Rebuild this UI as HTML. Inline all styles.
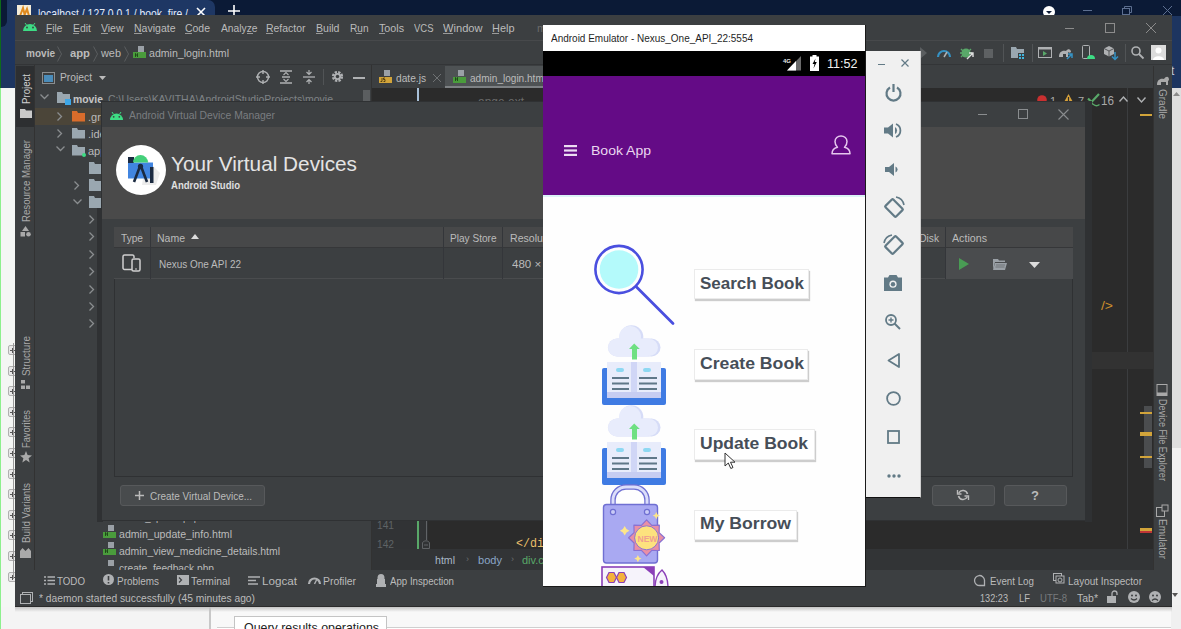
<!DOCTYPE html>
<html><head><meta charset="utf-8">
<style>
*{margin:0;padding:0;box-sizing:border-box}
html,body{width:1181px;height:629px;overflow:hidden;background:#f0f0f0;font-family:"Liberation Sans",sans-serif;position:relative}
.a{position:absolute}
.t{position:absolute;white-space:pre;line-height:1}
svg{overflow:visible}
</style></head><body>
<div class="a" style="left:0px;top:0px;width:1181px;height:629px;background:#f1f1f1;"></div>
<div class="a" style="left:0px;top:0px;width:1181px;height:16px;background:#0b1a36;"></div>
<div class="a" style="left:0px;top:0px;width:16px;height:88px;background:#1d3560;"></div>
<div class="a" style="left:1px;top:0px;width:6px;height:27px;background:#0b1a36;border-radius:0 0 6px 0"></div>
<div class="a" style="left:0px;top:0px;width:1px;height:88px;background:#0d6a1a;"></div>
<div class="a" style="left:0px;top:88px;width:1px;height:541px;background:#8df08d;"></div>
<div class="a" style="left:1px;top:88px;width:14px;height:541px;background:#f4f6f4;"></div>
<div class="a" style="left:1171px;top:16px;width:10px;height:72px;background:#1d3560;"></div>
<div class="a" style="left:1171px;top:88px;width:10px;height:360px;background:#e4e4e4;"></div>
<div class="a" style="left:1172px;top:88px;width:9px;height:360px;background:#dedede;"></div>
<svg class="a" style="left:1173px;top:92px;" width="7" height="4" viewBox="0 0 7 4"><path d="M0 4L3.5 0L7 4Z" fill="#8a8a8a"/></svg>
<div class="t" style="left:1171px;top:64.84px;font-size:12px;font-family:'Liberation Sans';font-weight:normal;color:#c0c8d8;">t</div>
<div class="a" style="left:7px;top:0px;width:208px;height:20px;background:#1e3764;border-radius:7px 7px 0 0"></div>
<svg class="a" style="left:17px;top:5px;" width="14" height="12" viewBox="0 0 14 12"><rect x="0" y="0" width="14" height="12" fill="#f4ecd8"/><path d="M3 11 L6 3 L8 11 M7 11 L10 4 L12 11" stroke="#e08a1e" stroke-width="2" fill="none"/></svg>
<div class="t" style="left:38px;top:7.00px;font-size:13px;font-family:'Liberation Sans';font-weight:normal;color:#e6ecf6;transform:scaleX(0.7983);transform-origin:0 0;">localhost / 127.0.0.1 / book_fire /</div>
<svg class="a" style="left:196px;top:7px;" width="10" height="10" viewBox="0 0 10 10"><path d="M1 1L9 9M9 1L1 9" stroke="#fff" stroke-width="1.6"/></svg>
<svg class="a" style="left:228px;top:5px;" width="12" height="12" viewBox="0 0 12 12"><path d="M6 0V12M0 6H12" stroke="#fff" stroke-width="1.6"/></svg>
<svg class="a" style="left:1043px;top:6px;" width="12" height="12" viewBox="0 0 12 12"><circle cx="6" cy="6" r="6" fill="#fff"/><path d="M3 5h6l-3 3z" fill="#0b1a36"/></svg>
<div class="a" style="left:1083px;top:10px;width:9px;height:1px;background:#5d6f90;"></div>
<svg class="a" style="left:1122px;top:6px;" width="10" height="9" viewBox="0 0 10 9"><rect x="0.5" y="2.5" width="7" height="6" fill="none" stroke="#5d6f90"/><path d="M2.5 2.5V0.5H9.5V6.5H7.5" fill="none" stroke="#5d6f90"/></svg>
<svg class="a" style="left:1163px;top:6px;" width="9" height="9" viewBox="0 0 9 9"><path d="M0 0L9 9M9 0L0 9" stroke="#5d6f90" stroke-width="1"/></svg>
<div class="a" style="left:0px;top:607px;width:1181px;height:22px;background:#f4f4f4;"></div>
<div class="a" style="left:209px;top:607px;width:2px;height:22px;background:#c8c8c8;"></div>
<div class="a" style="left:211px;top:607px;width:960px;height:22px;background:#f8f8f8;"></div>
<div class="a" style="left:217px;top:627px;width:960px;height:2px;background:#ffffff;border-top:1px solid #cfcfcf"></div>
<div class="a" style="left:234px;top:616px;width:153px;height:13px;background:#ffffff;border:1px solid #c4c4c4;border-bottom:none"></div>
<div class="t" style="left:244px;top:621.00px;font-size:13px;font-family:'Liberation Sans';font-weight:normal;color:#222222;transform:scaleX(0.9532);transform-origin:0 0;">Query results operations</div>
<div class="a" style="left:1171px;top:605px;width:10px;height:24px;background:#f0f0f0;"></div>
<div class="a" style="left:0px;top:600px;width:1px;height:29px;background:#8df08d;"></div>
<svg class="a" style="left:1171px;top:592px;" width="8" height="6" viewBox="0 0 8 6"><path d="M1 1h6l-3 4z" fill="#555"/></svg>
<div class="a" style="left:8px;top:345px;width:9px;height:10px;background:#e8e8e8;border:1px solid #b0b0b0;border-radius:2px"></div>
<div class="a" style="left:10px;top:350px;width:6px;height:1px;background:#555;"></div>
<div class="a" style="left:12px;top:348px;width:1px;height:5px;background:#555;"></div>
<div class="a" style="left:8px;top:366px;width:9px;height:10px;background:#e8e8e8;border:1px solid #b0b0b0;border-radius:2px"></div>
<div class="a" style="left:10px;top:371px;width:6px;height:1px;background:#555;"></div>
<div class="a" style="left:12px;top:369px;width:1px;height:5px;background:#555;"></div>
<div class="a" style="left:8px;top:386px;width:9px;height:10px;background:#e8e8e8;border:1px solid #b0b0b0;border-radius:2px"></div>
<div class="a" style="left:10px;top:391px;width:6px;height:1px;background:#555;"></div>
<div class="a" style="left:12px;top:389px;width:1px;height:5px;background:#555;"></div>
<div class="a" style="left:8px;top:407px;width:9px;height:10px;background:#e8e8e8;border:1px solid #b0b0b0;border-radius:2px"></div>
<div class="a" style="left:10px;top:412px;width:6px;height:1px;background:#555;"></div>
<div class="a" style="left:12px;top:410px;width:1px;height:5px;background:#555;"></div>
<div class="a" style="left:8px;top:427px;width:9px;height:10px;background:#e8e8e8;border:1px solid #b0b0b0;border-radius:2px"></div>
<div class="a" style="left:10px;top:432px;width:6px;height:1px;background:#555;"></div>
<div class="a" style="left:12px;top:430px;width:1px;height:5px;background:#555;"></div>
<div class="a" style="left:8px;top:448px;width:9px;height:10px;background:#e8e8e8;border:1px solid #b0b0b0;border-radius:2px"></div>
<div class="a" style="left:10px;top:453px;width:6px;height:1px;background:#555;"></div>
<div class="a" style="left:12px;top:451px;width:1px;height:5px;background:#555;"></div>
<div class="a" style="left:8px;top:469px;width:9px;height:10px;background:#e8e8e8;border:1px solid #b0b0b0;border-radius:2px"></div>
<div class="a" style="left:10px;top:474px;width:6px;height:1px;background:#555;"></div>
<div class="a" style="left:12px;top:472px;width:1px;height:5px;background:#555;"></div>
<div class="a" style="left:8px;top:489px;width:9px;height:10px;background:#e8e8e8;border:1px solid #b0b0b0;border-radius:2px"></div>
<div class="a" style="left:10px;top:494px;width:6px;height:1px;background:#555;"></div>
<div class="a" style="left:12px;top:492px;width:1px;height:5px;background:#555;"></div>
<div class="a" style="left:8px;top:510px;width:9px;height:10px;background:#e8e8e8;border:1px solid #b0b0b0;border-radius:2px"></div>
<div class="a" style="left:10px;top:515px;width:6px;height:1px;background:#555;"></div>
<div class="a" style="left:12px;top:513px;width:1px;height:5px;background:#555;"></div>
<div class="a" style="left:8px;top:530px;width:9px;height:10px;background:#e8e8e8;border:1px solid #b0b0b0;border-radius:2px"></div>
<div class="a" style="left:10px;top:535px;width:6px;height:1px;background:#555;"></div>
<div class="a" style="left:12px;top:533px;width:1px;height:5px;background:#555;"></div>
<div class="a" style="left:8px;top:551px;width:9px;height:10px;background:#e8e8e8;border:1px solid #b0b0b0;border-radius:2px"></div>
<div class="a" style="left:10px;top:556px;width:6px;height:1px;background:#555;"></div>
<div class="a" style="left:12px;top:554px;width:1px;height:5px;background:#555;"></div>
<div class="a" style="left:8px;top:572px;width:9px;height:10px;background:#e8e8e8;border:1px solid #b0b0b0;border-radius:2px"></div>
<div class="a" style="left:10px;top:577px;width:6px;height:1px;background:#555;"></div>
<div class="a" style="left:12px;top:575px;width:1px;height:5px;background:#555;"></div>
<div class="a" style="left:13px;top:343px;width:1px;height:236px;background:#9a9a9a;"></div>
<div class="a" style="left:15px;top:15px;width:1157px;height:592px;background:#3c3f41;"></div>
<div class="a" style="left:15px;top:40px;width:1157px;height:1px;background:#47494b;"></div>
<svg class="a" style="left:22px;top:21px;" width="16" height="10" viewBox="0 0 16 10"><path d="M1 10 A7 7 0 0 1 15 10Z" fill="#3ddc84"/><circle cx="5" cy="6.5" r="0.9" fill="#3c3f41"/><circle cx="11" cy="6.5" r="0.9" fill="#3c3f41"/><path d="M3 2L4.5 4M13 2L11.5 4" stroke="#3ddc84" stroke-width="1"/></svg>
<div class="t" style="left:46px;top:22.69px;font-size:11px;font-family:'Liberation Sans';font-weight:normal;color:#bbbbbb;transform:scaleX(0.9304);transform-origin:0 0;">File</div>
<div class="t" style="left:73px;top:22.69px;font-size:11px;font-family:'Liberation Sans';font-weight:normal;color:#bbbbbb;transform:scaleX(0.9489);transform-origin:0 0;">Edit</div>
<div class="t" style="left:101px;top:22.69px;font-size:11px;font-family:'Liberation Sans';font-weight:normal;color:#bbbbbb;transform:scaleX(0.9511);transform-origin:0 0;">View</div>
<div class="t" style="left:134px;top:22.69px;font-size:11px;font-family:'Liberation Sans';font-weight:normal;color:#bbbbbb;transform:scaleX(0.9557);transform-origin:0 0;">Navigate</div>
<div class="t" style="left:185px;top:22.69px;font-size:11px;font-family:'Liberation Sans';font-weight:normal;color:#bbbbbb;transform:scaleX(0.9507);transform-origin:0 0;">Code</div>
<div class="t" style="left:221px;top:22.69px;font-size:11px;font-family:'Liberation Sans';font-weight:normal;color:#bbbbbb;transform:scaleX(0.9325);transform-origin:0 0;">Analyze</div>
<div class="t" style="left:266px;top:22.69px;font-size:11px;font-family:'Liberation Sans';font-weight:normal;color:#bbbbbb;transform:scaleX(0.9500);transform-origin:0 0;">Refactor</div>
<div class="t" style="left:316px;top:22.69px;font-size:11px;font-family:'Liberation Sans';font-weight:normal;color:#bbbbbb;transform:scaleX(0.9604);transform-origin:0 0;">Build</div>
<div class="t" style="left:350px;top:22.69px;font-size:11px;font-family:'Liberation Sans';font-weight:normal;color:#bbbbbb;transform:scaleX(0.9164);transform-origin:0 0;">Run</div>
<div class="t" style="left:379px;top:22.69px;font-size:11px;font-family:'Liberation Sans';font-weight:normal;color:#bbbbbb;transform:scaleX(0.9732);transform-origin:0 0;">Tools</div>
<div class="t" style="left:414px;top:22.69px;font-size:11px;font-family:'Liberation Sans';font-weight:normal;color:#bbbbbb;transform:scaleX(0.8619);transform-origin:0 0;">VCS</div>
<div class="t" style="left:443px;top:22.69px;font-size:11px;font-family:'Liberation Sans';font-weight:normal;color:#bbbbbb;transform:scaleX(1.0096);transform-origin:0 0;">Window</div>
<div class="t" style="left:492px;top:22.69px;font-size:11px;font-family:'Liberation Sans';font-weight:normal;color:#bbbbbb;transform:scaleX(0.9945);transform-origin:0 0;">Help</div>
<div class="t" style="left:537px;top:22.69px;font-size:11px;font-family:'Liberation Sans';font-weight:normal;color:#6b6b6b;">m</div>
<div class="a" style="left:46px;top:33px;width:6px;height:1px;background:#9a9a9a;"></div>
<div class="a" style="left:73px;top:33px;width:6px;height:1px;background:#9a9a9a;"></div>
<div class="a" style="left:101px;top:33px;width:7px;height:1px;background:#9a9a9a;"></div>
<div class="a" style="left:134px;top:33px;width:8px;height:1px;background:#9a9a9a;"></div>
<div class="a" style="left:185px;top:33px;width:7px;height:1px;background:#9a9a9a;"></div>
<div class="a" style="left:247px;top:33px;width:6px;height:1px;background:#9a9a9a;"></div>
<div class="a" style="left:266px;top:33px;width:7px;height:1px;background:#9a9a9a;"></div>
<div class="a" style="left:316px;top:33px;width:7px;height:1px;background:#9a9a9a;"></div>
<div class="a" style="left:356px;top:33px;width:6px;height:1px;background:#9a9a9a;"></div>
<div class="a" style="left:379px;top:33px;width:6px;height:1px;background:#9a9a9a;"></div>
<div class="a" style="left:443px;top:33px;width:10px;height:1px;background:#9a9a9a;"></div>
<div class="a" style="left:492px;top:33px;width:7px;height:1px;background:#9a9a9a;"></div>
<div class="a" style="left:1065px;top:28px;width:9px;height:1px;background:#8c8c8c;"></div>
<div class="a" style="left:1105px;top:23px;width:10px;height:10px;border:1px solid #8c8c8c"></div>
<svg class="a" style="left:1146px;top:23px;" width="10" height="10" viewBox="0 0 10 10"><path d="M0 0L10 10M10 0L0 10" stroke="#8c8c8c" stroke-width="1"/></svg>
<div class="a" style="left:15px;top:64px;width:1157px;height:1px;background:#333537;"></div>
<div class="t" style="left:26px;top:47.69px;font-size:11px;font-family:'Liberation Sans';font-weight:bold;color:#bbbbbb;transform:scaleX(0.9120);transform-origin:0 0;">movie</div>
<svg class="a" style="left:57px;top:46px;" width="5" height="16" viewBox="0 0 5 16"><path d="M0.5 0.5L4.5 8L0.5 15.5" stroke="#5a5d5f" fill="none"/></svg>
<div class="t" style="left:70px;top:47.69px;font-size:11px;font-family:'Liberation Sans';font-weight:bold;color:#bbbbbb;transform:scaleX(1.0224);transform-origin:0 0;">app</div>
<svg class="a" style="left:93px;top:46px;" width="5" height="16" viewBox="0 0 5 16"><path d="M0.5 0.5L4.5 8L0.5 15.5" stroke="#5a5d5f" fill="none"/></svg>
<div class="t" style="left:101px;top:47.69px;font-size:11px;font-family:'Liberation Sans';font-weight:normal;color:#bbbbbb;transform:scaleX(0.9907);transform-origin:0 0;">web</div>
<svg class="a" style="left:124px;top:46px;" width="5" height="16" viewBox="0 0 5 16"><path d="M0.5 0.5L4.5 8L0.5 15.5" stroke="#5a5d5f" fill="none"/></svg>
<svg class="a" style="left:133px;top:46px;" width="13" height="12" viewBox="0 0 13 12"><path d="M5 0H11V6H5Z" fill="#9aa0a6"/><rect x="0" y="6" width="13" height="6" fill="#4a9c3c"/><path d="M2.5 7.2V11M2.5 9H4.5M4.5 7.2V11" stroke="#173b12" stroke-width="0.8"/></svg>
<div class="t" style="left:149px;top:47.69px;font-size:11px;font-family:'Liberation Sans';font-weight:normal;color:#bbbbbb;transform:scaleX(0.9620);transform-origin:0 0;">admin_login.html</div>
<svg class="a" style="left:920px;top:47px;" width="8" height="12" viewBox="0 0 8 12"><path d="M0 0L7 6L0 12Z" fill="#5b5e60"/></svg>
<svg class="a" style="left:937px;top:47px;" width="14" height="11" viewBox="0 0 14 11"><path d="M1 10A6 6 0 0 1 13 10" stroke="#3592c4" stroke-width="2.2" fill="none"/><path d="M7 10L10 5" stroke="#afb1b3" stroke-width="1.5"/></svg>
<svg class="a" style="left:960px;top:46px;" width="14" height="14" viewBox="0 0 14 14"><circle cx="6" cy="7" r="4.5" fill="#59a869"/><path d="M1 3L3 5M11 3L9 5M0 7H2M10 7H12M1 11L3 9" stroke="#59a869" stroke-width="1.3"/><path d="M7 13L13 7M9 7H13V11" stroke="#e0e0e0" stroke-width="1.4" fill="none"/></svg>
<div class="a" style="left:984px;top:49px;width:9px;height:9px;background:#5e6163;"></div>
<div class="a" style="left:1003px;top:44px;width:1px;height:18px;background:#515456;"></div>
<svg class="a" style="left:1011px;top:46px;" width="14" height="13" viewBox="0 0 14 13"><path d="M0 1H5L6 3H13V12H0Z" fill="#9aa7b0"/><rect x="7" y="7" width="6" height="6" fill="#3c3f41"/><rect x="8" y="8" width="2" height="2" fill="#40b6e0"/><rect x="11" y="8" width="2" height="2" fill="#40b6e0"/><rect x="8" y="11" width="2" height="2" fill="#40b6e0"/><rect x="11" y="11" width="2" height="2" fill="#40b6e0"/></svg>
<div class="a" style="left:1032px;top:44px;width:1px;height:18px;background:#515456;"></div>
<svg class="a" style="left:1038px;top:47px;" width="14" height="11" viewBox="0 0 14 11"><rect x="0.5" y="0.5" width="13" height="10" fill="none" stroke="#afb1b3"/><rect x="0.5" y="0.5" width="13" height="2" fill="#afb1b3"/><path d="M5 4L9 6.5L5 9Z" fill="#59a869"/></svg>
<svg class="a" style="left:1058px;top:46px;" width="15" height="14" viewBox="0 0 15 14"><path d="M1 11C1 6 4 4 8 5C10 2 13 3 13 6C12 7 11 7 10 6V11H8V8H5V11H3Z" fill="#afb1b3"/><path d="M9 13L14 8M10 8H14V12" stroke="#3592c4" stroke-width="1.5" fill="none"/></svg>
<svg class="a" style="left:1082px;top:45px;" width="13" height="15" viewBox="0 0 13 15"><rect x="0.5" y="0.5" width="7" height="13" rx="1" fill="none" stroke="#afb1b3"/><path d="M5 14A4 4 0 0 1 13 14Z" fill="#3ddc84"/></svg>
<svg class="a" style="left:1104px;top:46px;" width="14" height="14" viewBox="0 0 14 14"><path d="M5 0L10 2.5V8L5 10.5L0 8V2.5Z" fill="#afb1b3"/><path d="M0 2.5L5 5L10 2.5M5 5V10.5" stroke="#3c3f41" stroke-width="0.8" fill="none"/><path d="M11 6V13M8 10.5L11 13.5L14 10.5" stroke="#3592c4" stroke-width="1.5" fill="none"/></svg>
<div class="a" style="left:1125px;top:44px;width:1px;height:18px;background:#515456;"></div>
<svg class="a" style="left:1131px;top:46px;" width="13" height="13" viewBox="0 0 13 13"><circle cx="5" cy="5" r="4" fill="none" stroke="#afb1b3" stroke-width="1.6"/><path d="M8 8L12.5 12.5" stroke="#afb1b3" stroke-width="1.8"/></svg>
<svg class="a" style="left:1151px;top:45px;" width="15" height="15" viewBox="0 0 15 15"><rect x="0" y="0" width="15" height="15" fill="#dcdcdc"/><circle cx="7.5" cy="5.5" r="3" fill="#fff"/><path d="M2 15C2 10 13 10 13 15Z" fill="#fff"/></svg>
<div class="a" style="left:15px;top:65px;width:20px;height:542px;background:#3c3f41;"></div>
<div class="a" style="left:34px;top:65px;width:1px;height:505px;background:#323232;"></div>
<div class="a" style="left:16px;top:66px;width:18px;height:61px;background:#2d2f31;"></div>
<div class="t" style="left:20.5px;top:104.0px;font-size:11px;font-weight:normal;color:#d0d0d0;transform:rotate(-90deg) scaleX(0.8759);transform-origin:0 0;">Project</div>
<svg class="a" style="left:20px;top:109px;" width="12" height="9" viewBox="0 0 12 9"><path d="M0 0H5L6 1.5H12V9H0Z" fill="#c9c9c9"/></svg>
<div class="t" style="left:20.5px;top:222.0px;font-size:11px;font-weight:normal;color:#a9a9a9;transform:rotate(-90deg) scaleX(0.8764);transform-origin:0 0;">Resource Manager</div>
<svg class="a" style="left:20px;top:226px;" width="11" height="11" viewBox="0 0 11 11"><path d="M5.5 0L9 5H2Z" fill="#a9a9a9"/><rect x="0.5" y="6" width="4.5" height="4.5" fill="#a9a9a9"/><circle cx="8.5" cy="8.3" r="2.3" fill="#a9a9a9"/></svg>
<div class="t" style="left:20.5px;top:376.0px;font-size:11px;font-weight:normal;color:#a9a9a9;transform:rotate(-90deg) scaleX(0.8960);transform-origin:0 0;">Structure</div>
<svg class="a" style="left:21px;top:380px;" width="9" height="9" viewBox="0 0 9 9"><rect x="0" y="0" width="4" height="3.5" fill="#a9a9a9"/><rect x="0" y="5.5" width="4" height="3.5" fill="#a9a9a9"/><rect x="5" y="5.5" width="4" height="3.5" fill="#a9a9a9"/></svg>
<div class="t" style="left:20.5px;top:448.0px;font-size:11px;font-weight:normal;color:#a9a9a9;transform:rotate(-90deg) scaleX(0.8398);transform-origin:0 0;">Favorites</div>
<svg class="a" style="left:20px;top:451px;" width="12" height="12" viewBox="0 0 12 12"><path d="M6 0L7.6 4.1L12 4.4L8.6 7.2L9.7 11.5L6 9.1L2.3 11.5L3.4 7.2L0 4.4L4.4 4.1Z" fill="#a9a9a9"/></svg>
<div class="t" style="left:20.5px;top:543.0px;font-size:11px;font-weight:normal;color:#a9a9a9;transform:rotate(-90deg) scaleX(0.8947);transform-origin:0 0;">Build Variants</div>
<svg class="a" style="left:20px;top:548px;" width="11" height="10" viewBox="0 0 11 10"><path d="M0 10V3L2.5 0L5.5 3L8.5 0L11 3V10Z" fill="#a9a9a9"/></svg>
<div class="a" style="left:35px;top:65px;width:336px;height:23px;background:#3c3f41;"></div>
<div class="a" style="left:35px;top:88px;width:336px;height:482px;background:#3c3f41;"></div>
<svg class="a" style="left:42px;top:72px;" width="13" height="12" viewBox="0 0 13 12"><rect x="0.5" y="0.5" width="12" height="11" fill="#3c3f41" stroke="#8a8d8f"/><rect x="2" y="3" width="9" height="7" fill="#4a8cba"/></svg>
<div class="t" style="left:60px;top:71.69px;font-size:11px;font-family:'Liberation Sans';font-weight:normal;color:#bbbbbb;transform:scaleX(0.9343);transform-origin:0 0;">Project</div>
<svg class="a" style="left:99px;top:76px;" width="7" height="4" viewBox="0 0 7 4"><path d="M0 0H7L3.5 4Z" fill="#bbbbbb"/></svg>
<svg class="a" style="left:256px;top:70px;" width="14" height="14" viewBox="0 0 14 14"><circle cx="7" cy="7" r="5.5" fill="none" stroke="#afb1b3" stroke-width="1.4"/><path d="M7 0V4M7 10V14M0 7H4M10 7H14" stroke="#afb1b3" stroke-width="1.4"/></svg>
<svg class="a" style="left:280px;top:70px;" width="12" height="14" viewBox="0 0 12 14"><path d="M0 1H12M0 13H12M2 7H10" stroke="#afb1b3" stroke-width="1.3"/><path d="M3.5 5L6 2.5L8.5 5M3.5 9L6 11.5L8.5 9" stroke="#afb1b3" stroke-width="1.1" fill="none"/></svg>
<svg class="a" style="left:303px;top:70px;" width="12" height="14" viewBox="0 0 12 14"><path d="M0 7H12" stroke="#afb1b3" stroke-width="1.3"/><path d="M6 0V4M3.5 2L6 4.5L8.5 2M6 14V10M3.5 12L6 9.5L8.5 12" stroke="#afb1b3" stroke-width="1.2" fill="none"/></svg>
<div class="a" style="left:323px;top:69px;width:1px;height:16px;background:#515456;"></div>
<svg class="a" style="left:331px;top:70px;" width="13" height="13" viewBox="0 0 13 13"><circle cx="6.5" cy="6.5" r="4.3" fill="none" stroke="#afb1b3" stroke-width="2.6" stroke-dasharray="2.2 1.2"/><circle cx="6.5" cy="6.5" r="3.6" fill="#afb1b3"/><circle cx="6.5" cy="6.5" r="1.7" fill="#3c3f41"/></svg>
<div class="a" style="left:353px;top:77px;width:12px;height:2px;background:#afb1b3;"></div>
<div class="a" style="left:371px;top:65px;width:1px;height:505px;background:#323232;"></div>
<svg class="a" style="left:40px;top:94px;" width="9" height="6" viewBox="0 0 9 6"><path d="M0.5 0.5L4.5 4.5L8.5 0.5" stroke="#8a8d8f" stroke-width="1.3" fill="none"/></svg>
<svg class="a" style="left:57px;top:92px;" width="15" height="13" viewBox="0 0 15 13"><path d="M0 0H5L6 2H13V11H0Z" fill="#9aa7b0"/><rect x="8" y="7" width="6" height="6" fill="#3ea7e8"/></svg>
<div class="t" style="left:73px;top:93.69px;font-size:11px;font-family:'Liberation Sans';font-weight:bold;color:#c6c6c6;transform:scaleX(0.9435);transform-origin:0 0;">movie</div>
<div class="t" style="left:108px;top:93.69px;font-size:11px;font-family:'Liberation Sans';font-weight:normal;color:#7f8386;transform:scaleX(0.9518);transform-origin:0 0;">C:\Users\KAVITHA\AndroidStudioProjects\movie</div>
<div class="a" style="left:363px;top:90px;width:7px;height:13px;background:#5b5e60;"></div>
<div class="a" style="left:35px;top:108px;width:336px;height:17px;background:#4b4539;"></div>
<svg class="a" style="left:57px;top:112px;" width="6" height="9" viewBox="0 0 6 9"><path d="M0.5 0.5L4.5 4.5L0.5 8.5" stroke="#8a8d8f" stroke-width="1.3" fill="none"/></svg>
<svg class="a" style="left:72px;top:111px;" width="13" height="11" viewBox="0 0 13 11"><path d="M0 0H5L6 2H13V10.5H0Z" fill="#d96c2b"/></svg>
<div class="t" style="left:88px;top:111.69px;font-size:11px;font-family:'Liberation Sans';font-weight:normal;color:#bbbbbb;">.gradle</div>
<svg class="a" style="left:57px;top:129px;" width="6" height="9" viewBox="0 0 6 9"><path d="M0.5 0.5L4.5 4.5L0.5 8.5" stroke="#8a8d8f" stroke-width="1.3" fill="none"/></svg>
<svg class="a" style="left:72px;top:128px;" width="13" height="11" viewBox="0 0 13 11"><path d="M0 0H5L6 2H13V10.5H0Z" fill="#9aa7b0"/></svg>
<div class="t" style="left:88px;top:128.69px;font-size:11px;font-family:'Liberation Sans';font-weight:normal;color:#bbbbbb;">.idea</div>
<svg class="a" style="left:56px;top:146px;" width="9" height="6" viewBox="0 0 9 6"><path d="M0.5 0.5L4.5 4.5L8.5 0.5" stroke="#8a8d8f" stroke-width="1.3" fill="none"/></svg>
<svg class="a" style="left:72px;top:145px;" width="14" height="12" viewBox="0 0 14 12"><path d="M0 0H5L6 2H13V10.5H0Z" fill="#9aa7b0"/><circle cx="12" cy="10" r="2" fill="#3ddc84"/></svg>
<div class="t" style="left:88px;top:145.69px;font-size:11px;font-family:'Liberation Sans';font-weight:normal;color:#bbbbbb;">app</div>
<svg class="a" style="left:89px;top:162px;" width="13" height="12" viewBox="0 0 13 12"><path d="M0 0H5L6 2H13V12H0Z" fill="#9aa7b0"/></svg>
<svg class="a" style="left:74px;top:181px;" width="6" height="9" viewBox="0 0 6 9"><path d="M0.5 0.5L4.5 4.5L0.5 8.5" stroke="#8a8d8f" stroke-width="1.3" fill="none"/></svg>
<svg class="a" style="left:89px;top:179px;" width="13" height="12" viewBox="0 0 13 12"><path d="M0 0H5L6 2H13V12H0Z" fill="#9aa7b0"/></svg>
<svg class="a" style="left:73px;top:199px;" width="9" height="6" viewBox="0 0 9 6"><path d="M0.5 0.5L4.5 4.5L8.5 0.5" stroke="#8a8d8f" stroke-width="1.3" fill="none"/></svg>
<svg class="a" style="left:89px;top:196px;" width="13" height="12" viewBox="0 0 13 12"><path d="M0 0H5L6 2H13V12H0Z" fill="#9aa7b0"/></svg>
<svg class="a" style="left:89px;top:215px;" width="6" height="9" viewBox="0 0 6 9"><path d="M0.5 0.5L4.5 4.5L0.5 8.5" stroke="#8a8d8f" stroke-width="1.3" fill="none"/></svg>
<svg class="a" style="left:89px;top:232px;" width="6" height="9" viewBox="0 0 6 9"><path d="M0.5 0.5L4.5 4.5L0.5 8.5" stroke="#8a8d8f" stroke-width="1.3" fill="none"/></svg>
<svg class="a" style="left:89px;top:250px;" width="6" height="9" viewBox="0 0 6 9"><path d="M0.5 0.5L4.5 4.5L0.5 8.5" stroke="#8a8d8f" stroke-width="1.3" fill="none"/></svg>
<svg class="a" style="left:89px;top:267px;" width="6" height="9" viewBox="0 0 6 9"><path d="M0.5 0.5L4.5 4.5L0.5 8.5" stroke="#8a8d8f" stroke-width="1.3" fill="none"/></svg>
<svg class="a" style="left:89px;top:285px;" width="6" height="9" viewBox="0 0 6 9"><path d="M0.5 0.5L4.5 4.5L0.5 8.5" stroke="#8a8d8f" stroke-width="1.3" fill="none"/></svg>
<svg class="a" style="left:89px;top:302px;" width="6" height="9" viewBox="0 0 6 9"><path d="M0.5 0.5L4.5 4.5L0.5 8.5" stroke="#8a8d8f" stroke-width="1.3" fill="none"/></svg>
<svg class="a" style="left:89px;top:319px;" width="6" height="9" viewBox="0 0 6 9"><path d="M0.5 0.5L4.5 4.5L0.5 8.5" stroke="#8a8d8f" stroke-width="1.3" fill="none"/></svg>
<svg class="a" style="left:103px;top:508px;" width="14" height="13" viewBox="0 0 14 13"><path d="M5 0H11V6H5Z" fill="#9aa0a6"/><rect x="0" y="7" width="13" height="6" fill="#4a9c3c"/><path d="M2.5 7.2V11M2.5 9H4.5M4.5 7.2V11" stroke="#173b12" stroke-width="0.8"/></svg>
<div class="t" style="left:119px;top:511.69px;font-size:11px;font-family:'Liberation Sans';font-weight:normal;color:#bbbbbb;transform:scaleX(0.8778);transform-origin:0 0;">admin_update.php</div>
<svg class="a" style="left:103px;top:525px;" width="14" height="13" viewBox="0 0 14 13"><path d="M5 0H11V6H5Z" fill="#9aa0a6"/><rect x="0" y="7" width="13" height="6" fill="#4a9c3c"/><path d="M2.5 7.2V11M2.5 9H4.5M4.5 7.2V11" stroke="#173b12" stroke-width="0.8"/></svg>
<div class="t" style="left:119px;top:528.69px;font-size:11px;font-family:'Liberation Sans';font-weight:normal;color:#bbbbbb;transform:scaleX(0.9623);transform-origin:0 0;">admin_update_info.html</div>
<svg class="a" style="left:103px;top:542px;" width="14" height="13" viewBox="0 0 14 13"><path d="M5 0H11V6H5Z" fill="#9aa0a6"/><rect x="0" y="7" width="13" height="6" fill="#4a9c3c"/><path d="M2.5 7.2V11M2.5 9H4.5M4.5 7.2V11" stroke="#173b12" stroke-width="0.8"/></svg>
<div class="t" style="left:119px;top:545.69px;font-size:11px;font-family:'Liberation Sans';font-weight:normal;color:#bbbbbb;transform:scaleX(0.9471);transform-origin:0 0;">admin_view_medicine_details.html</div>
<svg class="a" style="left:103px;top:560px;" width="13" height="10" viewBox="0 0 13 10"><path d="M5 0H11V6H5Z" fill="#9aa0a6"/></svg>
<div class="t" style="left:119px;top:562.69px;font-size:11px;font-family:'Liberation Sans';font-weight:normal;color:#bbbbbb;transform:scaleX(0.9246);transform-origin:0 0;">create_feedback.php</div>
<div class="a" style="left:35px;top:570px;width:336px;height:37px;background:#3c3f41;"></div>
<div class="a" style="left:372px;top:66px;width:800px;height:22px;background:#3c3f41;"></div>
<div class="a" style="left:372px;top:88px;width:781px;height:482px;background:#2b2b2b;"></div>
<div class="a" style="left:372px;top:88px;width:56px;height:482px;background:#313335;"></div>
<svg class="a" style="left:379px;top:70px;" width="13" height="13" viewBox="0 0 13 13"><path d="M5 0H11V6H5Z" fill="#9aa0a6"/><rect x="0" y="7" width="13" height="6" fill="#d2a43a"/><path d="M3 8V11.5H1.5M6 8H4.5V9.5H6V11.5H4.5" stroke="#3b2c08" stroke-width="0.8" fill="none"/></svg>
<div class="t" style="left:396px;top:72.69px;font-size:11px;font-family:'Liberation Sans';font-weight:normal;color:#bbbbbb;transform:scaleX(0.9253);transform-origin:0 0;">date.js</div>
<svg class="a" style="left:433px;top:74px;" width="8" height="8" viewBox="0 0 8 8"><path d="M0 0L8 8M8 0L0 8" stroke="#6e7173" stroke-width="1"/></svg>
<div class="a" style="left:445px;top:66px;width:100px;height:22px;background:#4e5254;"></div>
<div class="a" style="left:445px;top:86px;width:100px;height:2px;background:#7d8184;"></div>
<svg class="a" style="left:453px;top:70px;" width="13" height="13" viewBox="0 0 13 13"><path d="M5 0H11V6H5Z" fill="#9aa0a6"/><rect x="0" y="7" width="13" height="6" fill="#4a9c3c"/><path d="M2.5 7.2V11M2.5 9H4.5M4.5 7.2V11" stroke="#173b12" stroke-width="0.8"/></svg>
<div class="t" style="left:470px;top:72.69px;font-size:11px;font-family:'Liberation Sans';font-weight:normal;color:#bbbbbb;transform:scaleX(0.9139);transform-origin:0 0;">admin_login.html</div>
<div class="a" style="left:372px;top:88px;width:171px;height:14px;background:#2b2b2b;"></div>
<div class="a" style="left:417px;top:88px;width:2px;height:14px;background:#a8c0d8;"></div>
<div class="t" style="left:478px;top:95.84px;font-size:12px;font-family:'Liberation Sans';font-weight:normal;color:#6a6a6a;">ange ext</div>
<div class="a" style="left:1085px;top:88px;width:68px;height:482px;background:#2b2b2b;"></div>
<div class="a" style="left:1127px;top:88px;width:1px;height:482px;background:#3b3d3f;"></div>
<div class="a" style="left:1085px;top:352px;width:68px;height:17px;background:#323232;"></div>
<svg class="a" style="left:1037px;top:95px;" width="10" height="10" viewBox="0 0 10 10"><circle cx="5" cy="5" r="4.8" fill="#c93030"/></svg>
<div class="t" style="left:1050px;top:95.69px;font-size:11px;font-family:'Liberation Sans';font-weight:normal;color:#a9a9a9;">1</div>
<svg class="a" style="left:1063px;top:94px;" width="10" height="9" viewBox="0 0 10 9"><path d="M5.5 0L11 10H0Z" fill="#d7a13a"/><path d="M5.5 3V7" stroke="#2b2b2b" stroke-width="1.2"/></svg>
<div class="t" style="left:1078px;top:95.69px;font-size:11px;font-family:'Liberation Sans';font-weight:normal;color:#a9a9a9;">7</div>
<svg class="a" style="left:1087px;top:93px;" width="13" height="13" viewBox="0 0 13 13"><path d="M1 5.5L4.5 9L12 1" stroke="#59a869" stroke-width="2.2" fill="none"/><path d="M0.5 11.5Q3.5 9 6.5 11.5T12.5 11.5" stroke="#59a869" stroke-width="1.3" fill="none"/></svg>
<div class="t" style="left:1101px;top:94.84px;font-size:12px;font-family:'Liberation Sans';font-weight:normal;color:#a9a9a9;transform:scaleX(0.9731);transform-origin:0 0;">16</div>
<svg class="a" style="left:1119px;top:96px;" width="9" height="6" viewBox="0 0 9 6"><path d="M0.5 5.5L4.5 1L8.5 5.5" stroke="#afb1b3" stroke-width="1.4" fill="none"/></svg>
<svg class="a" style="left:1137px;top:97px;" width="9" height="6" viewBox="0 0 9 6"><path d="M0.5 0.5L4.5 5L8.5 0.5" stroke="#afb1b3" stroke-width="1.4" fill="none"/></svg>
<div class="a" style="left:1140px;top:114px;width:12px;height:2px;background:#d2a43a;"></div>
<div class="t" style="left:1101px;top:299.84px;font-size:12px;font-family:'Liberation Sans';font-weight:normal;color:#cc8f2c;transform:scaleX(1.1601);transform-origin:0 0;">/&gt;</div>
<div class="a" style="left:1144px;top:406px;width:8px;height:62px;background:#4b4d4f;"></div>
<div class="a" style="left:1140px;top:412px;width:12px;height:2px;background:#d2a43a;"></div>
<div class="a" style="left:1140px;top:432px;width:12px;height:2px;background:#d2a43a;"></div>
<div class="a" style="left:1140px;top:434px;width:12px;height:2px;background:#d2a43a;"></div>
<div class="a" style="left:1140px;top:456px;width:12px;height:2px;background:#d2a43a;"></div>
<div class="a" style="left:1140px;top:528px;width:12px;height:3px;background:#d2a43a;"></div>
<div class="a" style="left:1140px;top:531px;width:12px;height:2px;background:#c03636;"></div>
<div class="a" style="left:372px;top:520px;width:171px;height:29px;background:#2b2b2b;"></div>
<div class="a" style="left:372px;top:520px;width:56px;height:29px;background:#313335;"></div>
<div class="t" style="left:377px;top:519.69px;font-size:11px;font-family:'Liberation Sans';font-weight:normal;color:#5f6366;transform:scaleX(0.9260);transform-origin:0 0;">141</div>
<div class="t" style="left:377px;top:538.69px;font-size:11px;font-family:'Liberation Sans';font-weight:normal;color:#5f6366;transform:scaleX(0.9260);transform-origin:0 0;">142</div>
<div class="a" style="left:417px;top:520px;width:2px;height:29px;background:#59a869;"></div>
<div class="a" style="left:426px;top:520px;width:1px;height:20px;background:#606366;"></div>
<svg class="a" style="left:422px;top:539px;" width="8" height="10" viewBox="0 0 8 10"><path d="M0.5 3.5Q4 0 7.5 3.5V9.5H0.5Z" fill="#313335" stroke="#606366"/><path d="M2 6H6" stroke="#606366"/></svg>
<div class="t" style="left:516px;top:537.00px;font-size:13px;font-family:'Liberation Mono';font-weight:normal;color:#e8bf6a;transform:scaleX(0.8969);transform-origin:0 0;">&lt;/di</div>
<div class="a" style="left:372px;top:549px;width:781px;height:21px;background:#323436;"></div>
<div class="t" style="left:435px;top:554.69px;font-size:11px;font-family:'Liberation Sans';font-weight:normal;color:#a9b7c6;transform:scaleX(0.9624);transform-origin:0 0;">html</div>
<div class="t" style="left:466px;top:555.38px;font-size:9px;font-family:'Liberation Sans';font-weight:normal;color:#6a6d70;">›</div>
<div class="t" style="left:478px;top:554.69px;font-size:11px;font-family:'Liberation Sans';font-weight:normal;color:#8aa6c6;transform:scaleX(1.0059);transform-origin:0 0;">body</div>
<div class="t" style="left:511px;top:555.38px;font-size:9px;font-family:'Liberation Sans';font-weight:normal;color:#6a6d70;">›</div>
<div class="t" style="left:522px;top:554.69px;font-size:11px;font-family:'Liberation Sans';font-weight:normal;color:#59a869;">div.c</div>
<div class="a" style="left:1153px;top:66px;width:19px;height:504px;background:#3c3f41;"></div>
<div class="a" style="left:1153px;top:66px;width:1px;height:504px;background:#323232;"></div>
<svg class="a" style="left:1157px;top:75px;" width="12" height="10" viewBox="0 0 12 10"><path d="M0 10C0 5 3 3 7 4C9 1 12 1 12 5L11 6V10H9V7H4V10H2Z" fill="#a9a9a9"/></svg>
<div class="t" style="left:1167.5px;top:89.0px;font-size:11px;font-weight:normal;color:#a9a9a9;transform:rotate(90deg) scaleX(0.9082);transform-origin:0 0;">Gradle</div>
<svg class="a" style="left:1156px;top:384px;" width="12" height="12" viewBox="0 0 12 12"><rect x="1" y="0.5" width="10" height="11" fill="none" stroke="#a9a9a9"/><rect x="1" y="8.5" width="10" height="3" fill="#a9a9a9"/></svg>
<div class="t" style="left:1167.5px;top:399.0px;font-size:11px;font-weight:normal;color:#a9a9a9;transform:rotate(90deg) scaleX(0.8331);transform-origin:0 0;">Device File Explorer</div>
<svg class="a" style="left:1156px;top:505px;" width="12" height="12" viewBox="0 0 12 12"><rect x="0.5" y="2.5" width="8" height="9" fill="none" stroke="#a9a9a9"/><rect x="6" y="0" width="6" height="6" fill="#3c3f41" stroke="#a9a9a9"/></svg>
<div class="t" style="left:1167.5px;top:519.0px;font-size:11px;font-weight:normal;color:#a9a9a9;transform:rotate(90deg) scaleX(0.9084);transform-origin:0 0;">Emulator</div>
<div class="a" style="left:15px;top:570px;width:1157px;height:1px;background:#323232;"></div>
<div class="a" style="left:15px;top:570px;width:1157px;height:20px;background:#3c3f41;"></div>
<div class="a" style="left:15px;top:590px;width:1157px;height:17px;background:#3c3f41;"></div>
<svg class="a" style="left:44px;top:576px;" width="11" height="9" viewBox="0 0 11 9"><path d="M0 1H2M0 4.5H2M0 8H2M3.5 1H11M3.5 4.5H11M3.5 8H11" stroke="#afb1b3" stroke-width="1.3"/></svg>
<div class="t" style="left:57px;top:575.69px;font-size:11px;font-family:'Liberation Sans';font-weight:normal;color:#bbbbbb;transform:scaleX(0.8867);transform-origin:0 0;">TODO</div>
<svg class="a" style="left:103px;top:574px;" width="11" height="11" viewBox="0 0 11 11"><circle cx="5.5" cy="5.5" r="5.5" fill="#afb1b3"/><path d="M5.5 2V6.5M5.5 8V9.5" stroke="#3c3f41" stroke-width="1.6"/></svg>
<div class="t" style="left:117px;top:575.69px;font-size:11px;font-family:'Liberation Sans';font-weight:normal;color:#bbbbbb;transform:scaleX(0.9038);transform-origin:0 0;">Problems</div>
<svg class="a" style="left:177px;top:575px;" width="12" height="10" viewBox="0 0 12 10"><rect x="0" y="0" width="12" height="10" fill="#afb1b3"/><path d="M2 2.5L4.5 5L2 7.5" stroke="#3c3f41" stroke-width="1.2" fill="none"/></svg>
<div class="t" style="left:191px;top:575.69px;font-size:11px;font-family:'Liberation Sans';font-weight:normal;color:#bbbbbb;transform:scaleX(0.9380);transform-origin:0 0;">Terminal</div>
<svg class="a" style="left:248px;top:576px;" width="12" height="9" viewBox="0 0 12 9"><path d="M0 1H12M0 4.5H8M0 8H10" stroke="#afb1b3" stroke-width="1.4"/></svg>
<div class="t" style="left:262px;top:575.69px;font-size:11px;font-family:'Liberation Sans';font-weight:normal;color:#bbbbbb;transform:scaleX(1.0596);transform-origin:0 0;">Logcat</div>
<svg class="a" style="left:308px;top:576px;" width="13" height="8" viewBox="0 0 13 8"><path d="M1 8A5.5 5.5 0 0 1 12 8" stroke="#afb1b3" stroke-width="2.2" fill="none"/><path d="M6.5 8L9 3" stroke="#afb1b3" stroke-width="1.4"/></svg>
<div class="t" style="left:323px;top:575.69px;font-size:11px;font-family:'Liberation Sans';font-weight:normal;color:#bbbbbb;transform:scaleX(0.9471);transform-origin:0 0;">Profiler</div>
<svg class="a" style="left:376px;top:574px;" width="10" height="13" viewBox="0 0 10 13"><ellipse cx="5" cy="4" rx="3.5" ry="4" fill="#afb1b3"/><rect x="1" y="5" width="8" height="6" fill="#afb1b3"/><rect x="0" y="10" width="10" height="3" fill="#afb1b3"/></svg>
<div class="t" style="left:390px;top:575.69px;font-size:11px;font-family:'Liberation Sans';font-weight:normal;color:#bbbbbb;transform:scaleX(0.8793);transform-origin:0 0;">App Inspection</div>
<svg class="a" style="left:974px;top:574px;" width="12" height="12" viewBox="0 0 12 12"><path d="M10.5 11.5V6A5 5 0 1 0 6 11.5Z" fill="none" stroke="#afb1b3" stroke-width="1.3"/></svg>
<div class="t" style="left:990px;top:575.69px;font-size:11px;font-family:'Liberation Sans';font-weight:normal;color:#bbbbbb;transform:scaleX(0.8880);transform-origin:0 0;">Event Log</div>
<svg class="a" style="left:1053px;top:573px;" width="12" height="11" viewBox="0 0 12 11"><rect x="0.5" y="0.5" width="8" height="7" fill="none" stroke="#afb1b3"/><rect x="3" y="3" width="8" height="7" fill="#3c3f41" stroke="#afb1b3"/><circle cx="7" cy="7" r="2" fill="none" stroke="#afb1b3"/></svg>
<div class="t" style="left:1068px;top:575.69px;font-size:11px;font-family:'Liberation Sans';font-weight:normal;color:#bbbbbb;transform:scaleX(0.9097);transform-origin:0 0;">Layout Inspector</div>
<svg class="a" style="left:20px;top:592px;" width="13" height="12" viewBox="0 0 13 12"><rect x="2.5" y="0.5" width="10" height="9" fill="none" stroke="#afb1b3"/><rect x="0.5" y="2.5" width="10" height="9" fill="#3c3f41" stroke="#afb1b3"/></svg>
<div class="t" style="left:39px;top:592.69px;font-size:11px;font-family:'Liberation Sans';font-weight:normal;color:#bbbbbb;transform:scaleX(0.9321);transform-origin:0 0;">* daemon started successfully (45 minutes ago)</div>
<div class="t" style="left:980px;top:592.69px;font-size:11px;font-family:'Liberation Sans';font-weight:normal;color:#bbbbbb;transform:scaleX(0.8319);transform-origin:0 0;">132:23</div>
<div class="t" style="left:1019px;top:592.69px;font-size:11px;font-family:'Liberation Sans';font-weight:normal;color:#bbbbbb;transform:scaleX(0.8564);transform-origin:0 0;">LF</div>
<div class="t" style="left:1040px;top:592.69px;font-size:11px;font-family:'Liberation Sans';font-weight:normal;color:#777a7c;transform:scaleX(0.8662);transform-origin:0 0;">UTF-8</div>
<div class="t" style="left:1077px;top:592.69px;font-size:11px;font-family:'Liberation Sans';font-weight:normal;color:#bbbbbb;transform:scaleX(0.9532);transform-origin:0 0;">Tab*</div>
<svg class="a" style="left:1107px;top:591px;" width="12" height="12" viewBox="0 0 12 12"><rect x="0" y="5" width="9" height="7" fill="#afb1b3"/><path d="M5 5V2.5A2.5 2.5 0 0 1 10 2.5V4" stroke="#afb1b3" stroke-width="1.3" fill="none"/></svg>
<svg class="a" style="left:1128px;top:591px;" width="12" height="12" viewBox="0 0 12 12"><circle cx="6" cy="6" r="6" fill="#afb1b3"/><circle cx="4" cy="4.5" r="1" fill="#3c3f41"/><circle cx="8" cy="4.5" r="1" fill="#3c3f41"/><path d="M3 7.5Q6 10.5 9 7.5" stroke="#3c3f41" stroke-width="1.2" fill="none"/></svg>
<svg class="a" style="left:1149px;top:591px;" width="12" height="12" viewBox="0 0 12 12"><circle cx="6" cy="6" r="6" fill="#afb1b3"/><circle cx="4" cy="4.5" r="1" fill="#3c3f41"/><circle cx="8" cy="4.5" r="1" fill="#3c3f41"/><path d="M3 9.5Q6 6.5 9 9.5" stroke="#3c3f41" stroke-width="1.2" fill="none"/></svg>
<div class="a" style="left:15px;top:606px;width:1157px;height:1px;background:#2b2b2b;"></div>
<div class="a" style="left:15px;top:607px;width:1157px;height:5px;background:transparent;background:linear-gradient(#c4c4c4,rgba(240,240,240,0))"></div>
<div class="a" style="left:97px;top:208px;width:6px;height:314px;background:#2f3133;"></div>
<div class="a" style="left:1085px;top:101px;width:7px;height:421px;background:#2f3133;"></div>
<div class="a" style="left:101px;top:101px;width:985px;height:420px;background:#2f3133;"></div>
<div class="a" style="left:102px;top:102px;width:983px;height:418px;background:#3c3f41;"></div>
<div class="a" style="left:102px;top:102px;width:983px;height:25px;background:#3c3f41;"></div>
<svg class="a" style="left:109px;top:110px;" width="15" height="10" viewBox="0 0 15 10"><path d="M1 10 A6.5 6.5 0 0 1 14 10Z" fill="#3ddc84"/><circle cx="4.7" cy="6.8" r="0.9" fill="#3c3f41"/><circle cx="10.3" cy="6.8" r="0.9" fill="#3c3f41"/><path d="M3 2L4.3 4M12 2L10.7 4" stroke="#3ddc84" stroke-width="1"/></svg>
<div class="t" style="left:129px;top:109.69px;font-size:11px;font-family:'Liberation Sans';font-weight:normal;color:#7a7d80;transform:scaleX(0.9413);transform-origin:0 0;">Android Virtual Device Manager</div>
<div class="a" style="left:978px;top:114px;width:9px;height:1px;background:#8a8d8f;"></div>
<div class="a" style="left:1018px;top:109px;width:10px;height:10px;border:1px solid #8a8d8f"></div>
<svg class="a" style="left:1058px;top:109px;" width="11" height="11" viewBox="0 0 11 11"><path d="M0.5 0.5L10.5 10.5M10.5 0.5L0.5 10.5" stroke="#8a8d8f" stroke-width="1.1"/></svg>
<div class="a" style="left:102px;top:127px;width:983px;height:92px;background:#4a4a4a;"></div>
<svg class="a" style="left:116px;top:145px;" width="50" height="50" viewBox="0 0 50 50"><circle cx="25" cy="25" r="25" fill="#ffffff"/><path d="M30 14 L44 28 L40 40 L26 40Z" fill="#ececec"/><rect x="12" y="17.5" width="25" height="16" fill="#4185e0"/><rect x="12" y="12" width="6" height="6" fill="#1b2a41"/><path d="M17 17.5A7.5 7.5 0 0 1 32 17.5Z" fill="#44d07a"/><path d="M24.5 20L18 37M24.5 20L31 37" stroke="#1b2a41" stroke-width="2.6" fill="none"/><circle cx="24.5" cy="21.5" r="2" fill="none" stroke="#1b2a41" stroke-width="1.3"/><rect x="34" y="22" width="3.5" height="16" fill="#1b2a41"/></svg>
<div class="t" style="left:171px;top:153.22px;font-size:21px;font-family:'Liberation Sans';font-weight:normal;color:#e4e4e4;transform:scaleX(0.9897);transform-origin:0 0;">Your Virtual Devices</div>
<div class="t" style="left:171px;top:180.11px;font-size:10.5px;font-family:'Liberation Sans';font-weight:bold;color:#e6e6e6;transform:scaleX(0.9100);transform-origin:0 0;-webkit-text-stroke:0.1px #4a4a4a">Android Studio</div>
<div class="a" style="left:114px;top:227px;width:959px;height:250px;background:#3c3f41;border:1px solid #2f3133"></div>
<div class="a" style="left:114px;top:227px;width:959px;height:21px;background:#474849;"></div>
<div class="a" style="left:114px;top:247px;width:959px;height:1px;background:#363739;"></div>
<div class="a" style="left:114px;top:248px;width:959px;height:31px;background:#3c3f41;"></div>
<div class="a" style="left:114px;top:278px;width:959px;height:1px;background:#4a4c4e;"></div>
<div class="a" style="left:945px;top:248px;width:128px;height:31px;background:#4a4c4e;"></div>
<div class="a" style="left:150px;top:227px;width:1px;height:52px;background:#34363a;"></div>
<div class="a" style="left:443px;top:227px;width:1px;height:52px;background:#34363a;"></div>
<div class="a" style="left:502px;top:227px;width:1px;height:52px;background:#34363a;"></div>
<div class="a" style="left:945px;top:227px;width:1px;height:52px;background:#34363a;"></div>
<div class="t" style="left:121px;top:232.69px;font-size:11px;font-family:'Liberation Sans';font-weight:normal;color:#bbbbbb;transform:scaleX(0.9221);transform-origin:0 0;">Type</div>
<div class="t" style="left:157px;top:232.69px;font-size:11px;font-family:'Liberation Sans';font-weight:normal;color:#bbbbbb;transform:scaleX(0.9542);transform-origin:0 0;">Name</div>
<svg class="a" style="left:191px;top:234px;" width="8" height="5" viewBox="0 0 8 5"><path d="M0 5L4 0L8 5Z" fill="#dcdcdc"/></svg>
<div class="t" style="left:450px;top:232.69px;font-size:11px;font-family:'Liberation Sans';font-weight:normal;color:#bbbbbb;transform:scaleX(0.9163);transform-origin:0 0;">Play Store</div>
<div class="t" style="left:510px;top:232.69px;font-size:11px;font-family:'Liberation Sans';font-weight:normal;color:#bbbbbb;transform:scaleX(0.9618);transform-origin:0 0;">Resolution</div>
<div class="t" style="left:952px;top:232.69px;font-size:11px;font-family:'Liberation Sans';font-weight:normal;color:#bbbbbb;transform:scaleX(0.9701);transform-origin:0 0;">Actions</div>
<div class="t" style="left:905px;top:232.69px;font-size:11px;font-family:'Liberation Sans';font-weight:normal;color:#bbbbbb;transform:scaleX(0.9267);transform-origin:0 0;">on Disk</div>
<svg class="a" style="left:122px;top:254px;" width="19" height="18" viewBox="0 0 19 18"><path d="M12 15.5H2.5A1.5 1.5 0 0 1 1 14V2.5A1.5 1.5 0 0 1 2.5 1H10.5A1.5 1.5 0 0 1 12 2.5V4" fill="none" stroke="#cfcfcf" stroke-width="1.5"/><rect x="10" y="5" width="8" height="12" rx="1.5" fill="#3c3f41" stroke="#cfcfcf" stroke-width="1.5"/><path d="M13 15H15" stroke="#cfcfcf"/></svg>
<div class="t" style="left:159px;top:258.69px;font-size:11px;font-family:'Liberation Sans';font-weight:normal;color:#bbbbbb;transform:scaleX(0.9061);transform-origin:0 0;">Nexus One API 22</div>
<div class="t" style="left:512px;top:258.69px;font-size:11px;font-family:'Liberation Sans';font-weight:normal;color:#bbbbbb;transform:scaleX(1.0505);transform-origin:0 0;">480 × 800: hdpi</div>
<svg class="a" style="left:959px;top:258px;" width="10" height="12" viewBox="0 0 10 12"><path d="M0 0L10 6L0 12Z" fill="#499c54"/></svg>
<svg class="a" style="left:993px;top:259px;" width="14" height="11" viewBox="0 0 14 11"><path d="M0 0H5L6 1.5H12V3H2L0 11Z" fill="#9aa0a6"/><path d="M2 4H14L12 11H0Z" fill="#9aa0a6"/><path d="M3 6H12M2.5 8H11.5" stroke="#5e6265" stroke-width="0.7"/></svg>
<svg class="a" style="left:1029px;top:262px;" width="11" height="6" viewBox="0 0 11 6"><path d="M0 0H11L5.5 6Z" fill="#dcdcdc"/></svg>
<div class="a" style="left:120px;top:485px;width:145px;height:21px;background:#484b4d;border:1px solid #57595b;border-radius:3px"></div>
<svg class="a" style="left:135px;top:491px;" width="9" height="9" viewBox="0 0 9 9"><path d="M4.5 0V9M0 4.5H9" stroke="#bbbbbb" stroke-width="1.5"/></svg>
<div class="t" style="left:150px;top:490.69px;font-size:11px;font-family:'Liberation Sans';font-weight:normal;color:#bbbbbb;transform:scaleX(0.9034);transform-origin:0 0;">Create Virtual Device...</div>
<div class="a" style="left:932px;top:485px;width:63px;height:21px;background:#484b4d;border:1px solid #57595b;border-radius:3px"></div>
<svg class="a" style="left:957px;top:489px;" width="12" height="12" viewBox="0 0 12 12"><path d="M10.5 5A4.7 4.7 0 0 0 1.8 4M1.5 7A4.7 4.7 0 0 0 10.2 8" stroke="#bbbbbb" stroke-width="1.6" fill="none"/><path d="M0.5 1V5H4.5M11.5 11V7H7.5" stroke="#bbbbbb" stroke-width="1.4" fill="none"/></svg>
<div class="a" style="left:1004px;top:485px;width:63px;height:21px;background:#484b4d;border:1px solid #57595b;border-radius:3px"></div>
<div class="t" style="left:1031px;top:489.00px;font-size:13px;font-family:'Liberation Sans';font-weight:bold;color:#bbbbbb;">?</div>
<div class="a" style="left:543px;top:25px;width:323px;height:562px;background:#1a1a1a;"></div>
<div class="a" style="left:543px;top:25px;width:322px;height:26px;background:#ffffff;"></div>
<div class="t" style="left:551px;top:32.69px;font-size:11px;font-family:'Liberation Sans';font-weight:normal;color:#1f1f1f;transform:scaleX(0.9075);transform-origin:0 0;">Android Emulator - Nexus_One_API_22:5554</div>
<div class="a" style="left:543px;top:51px;width:322px;height:25px;background:#000000;"></div>
<svg class="a" style="left:783px;top:57px;" width="10" height="6" viewBox="0 0 10 6"><text x="0" y="5.5" font-family="Liberation Sans" font-size="6" font-weight="bold" fill="#e8e8e8">4G</text></svg>
<svg class="a" style="left:787px;top:56px;" width="14" height="15" viewBox="0 0 14 15"><path d="M14 0V14.5H0Z" fill="#6a6a6a"/><path d="M9 5V14.5H0Z" fill="#ffffff"/></svg>
<svg class="a" style="left:810px;top:55px;" width="9" height="16" viewBox="0 0 9 16"><path d="M2.5 0H6.5V1.5H9V16H0V1.5H2.5Z" fill="#ffffff"/><path d="M5.5 3.5L2.5 9H4.5L3.5 13.5L6.8 7H4.8Z" fill="#000"/></svg>
<div class="t" style="left:827px;top:57.84px;font-size:12px;font-family:'Liberation Sans';font-weight:normal;color:#f2f2f2;transform:scaleX(1.0466);transform-origin:0 0;">11:52</div>
<div class="a" style="left:543px;top:76px;width:322px;height:119px;background:#640b86;"></div>
<svg class="a" style="left:564px;top:145px;" width="13" height="11" viewBox="0 0 13 11"><rect x="0" y="0" width="13" height="2.2" fill="#ecdcf2"/><rect x="0" y="4.4" width="13" height="2.2" fill="#ecdcf2"/><rect x="0" y="8.8" width="13" height="2.2" fill="#ecdcf2"/></svg>
<div class="t" style="left:591px;top:143.57px;font-size:13.5px;font-family:'Liberation Sans';font-weight:normal;color:#ead8f0;transform:scaleX(1.0381);transform-origin:0 0;">Book App</div>
<svg class="a" style="left:831px;top:136px;" width="20" height="19" viewBox="0 0 20 19"><path d="M6.5 11.2C4.5 9.5 4 7.5 4 5.5A6 5.6 0 0 1 16 5.5C16 7.5 15.5 9.5 13.5 11.2C17 12 19 14 19 17.8H1C1 14 3 12 6.5 11.2Z" fill="none" stroke="#e6c8ee" stroke-width="1.5" stroke-linejoin="round"/></svg>
<div class="a" style="left:543px;top:195px;width:322px;height:2px;background:#dcf3f7;"></div>
<div class="a" style="left:543px;top:197px;width:322px;height:389px;background:#fefefe;"></div>
<svg class="a" style="left:590px;top:240px;" width="90" height="90" viewBox="0 0 90 90"><circle cx="29" cy="29.5" r="19.3" fill="#b4fafb"/><circle cx="29" cy="29.5" r="23.6" fill="none" stroke="#4a4fdf" stroke-width="2.6"/><path d="M46.5 47L83 83.5" stroke="#4a4fdf" stroke-width="2.8" stroke-linecap="round"/></svg>
<svg class="a" style="left:602px;top:325px;" width="64" height="81" viewBox="0 0 64 81"><g fill="#d6dcf7"><circle cx="29.5" cy="12" r="11.8"/><circle cx="49.5" cy="22.5" r="9"/><rect x="6" y="13.5" width="50" height="18" rx="9"/></g><g fill="#e8ecfc"><circle cx="28" cy="12" r="11"/><circle cx="47.5" cy="22.5" r="8.5"/><rect x="6" y="13.5" width="46" height="18" rx="9"/></g><path d="M32.2 18.5L27 24H30V34.5H35V24H37.8Z" fill="#6fe082"/><rect x="0" y="43" width="64" height="37" rx="2" fill="#3f7be3"/><rect x="5" y="37" width="27" height="36" fill="#e8ecfb"/><rect x="32" y="37" width="27" height="36" fill="#e8ecfb"/><rect x="29" y="37" width="6" height="36" fill="#d0d6f6"/><rect x="5" y="67" width="54" height="6" fill="#c6ccf2"/><rect x="14" y="43" width="8" height="4" rx="2" fill="#8ed8f2"/><rect x="41" y="43" width="8" height="4" rx="2" fill="#8ed8f2"/><path d="M10 53H27M10 58.5H27M10 64H27M37 53H55M37 58.5H55M37 64H55" stroke="#5f7789" stroke-width="2"/></svg>
<svg class="a" style="left:602px;top:405px;" width="64" height="81" viewBox="0 0 64 81"><g fill="#d6dcf7"><circle cx="29.5" cy="12" r="11.8"/><circle cx="49.5" cy="22.5" r="9"/><rect x="6" y="13.5" width="50" height="18" rx="9"/></g><g fill="#e8ecfc"><circle cx="28" cy="12" r="11"/><circle cx="47.5" cy="22.5" r="8.5"/><rect x="6" y="13.5" width="46" height="18" rx="9"/></g><path d="M32.2 18.5L27 24H30V34.5H35V24H37.8Z" fill="#6fe082"/><rect x="0" y="43" width="64" height="37" rx="2" fill="#3f7be3"/><rect x="5" y="37" width="27" height="36" fill="#e8ecfb"/><rect x="32" y="37" width="27" height="36" fill="#e8ecfb"/><rect x="29" y="37" width="6" height="36" fill="#d0d6f6"/><rect x="5" y="67" width="54" height="6" fill="#c6ccf2"/><rect x="14" y="43" width="8" height="4" rx="2" fill="#8ed8f2"/><rect x="41" y="43" width="8" height="4" rx="2" fill="#8ed8f2"/><path d="M10 53H27M10 58.5H27M10 64H27M37 53H55M37 58.5H55M37 64H55" stroke="#5f7789" stroke-width="2"/></svg>
<svg class="a" style="left:598px;top:486px;" width="72" height="82" viewBox="0 0 72 82"><path d="M15 27V14A13 13 0 0 1 28 1H36A13 13 0 0 1 49 14V27" fill="none" stroke="#6f6fd2" stroke-width="5.5"/><path d="M15 27V14A13 13 0 0 1 28 1H36A13 13 0 0 1 49 14V27" fill="none" stroke="#dcdefa" stroke-width="3"/><rect x="5.5" y="18.5" width="54" height="58.5" rx="3" fill="#a9a9f2" stroke="#6f6fd2" stroke-width="1.4"/><circle cx="15" cy="26" r="2.6" fill="#c9cbf6" stroke="#6f6fd2" stroke-width="1.2"/><circle cx="49" cy="26" r="2.6" fill="#c9cbf6" stroke="#6f6fd2" stroke-width="1.2"/><polygon points="48.6,33.8 53.8,39.3 61.3,39.1 61.1,46.6 66.6,51.8 61.1,57.0 61.3,64.5 53.8,64.3 48.6,69.8 43.4,64.3 35.9,64.5 36.1,57.0 30.6,51.8 36.1,46.6 35.9,39.1 43.4,39.3" fill="#e98fa6" stroke="#8a72d2" stroke-width="1.2" stroke-linejoin="round"/><circle cx="48.6" cy="51.8" r="12" fill="#fde27e" stroke="#8a72d2" stroke-width="1"/><text x="39.5" y="55.5" font-family="Liberation Sans" font-size="8.5" font-weight="bold" fill="#f0a090">NEW</text><path d="M26.7 40L28.5 43L31.5 44.8L28.5 46.6L26.7 49.6L24.9 46.6L21.9 44.8L24.9 43Z" fill="#fde68a"/><path d="M58.3 26L59.5 28.4L61.9 29.6L59.5 30.8L58.3 33.2L57.1 30.8L54.7 29.6L57.1 28.4Z" fill="#fde68a"/><path d="M39.9 69L41.1 71.4L43.5 72.6L41.1 73.8L39.9 76.2L38.7 73.8L36.3 72.6L38.7 71.4Z" fill="#fde68a"/></svg>
<svg class="a" style="left:600px;top:566px;overflow:hidden" width="72" height="20" viewBox="0 0 72 20"><rect x="2" y="1" width="52" height="22" fill="#f6f3fb" stroke="#8b3fb8" stroke-width="1.6"/><path d="M43 1L54 10V1Z" fill="#8b3fb8"/><path d="M9 6.5L14 6.5L16.5 11.5L14 16.5L9 16.5L6.5 11.5Z" fill="#f4b13c" stroke="#8b3fb8" stroke-width="1.2"/><path d="M19 6.5L24 6.5L26.5 11.5L24 16.5L19 16.5L16.5 11.5Z" fill="#f4b13c" stroke="#8b3fb8" stroke-width="1.2"/><path d="M62 4C57 8 55 14 55 22H68C68 14 66 8 62 4Z" fill="#f6f3fb" stroke="#8b3fb8" stroke-width="1.4"/><circle cx="61.5" cy="16" r="2" fill="#8b3fb8"/></svg>
<div class="a" style="left:694px;top:269px;width:115px;height:30px;background:#ffffff;border:1px solid #ebebeb;box-shadow:1px 2px 1px #cdcdcd"></div>
<div class="t" style="left:700px;top:274.61px;font-size:17px;font-family:'Liberation Sans';font-weight:bold;color:#464e58;">Search Book</div>
<div class="a" style="left:694px;top:349px;width:114px;height:31px;background:#ffffff;border:1px solid #ebebeb;box-shadow:1px 2px 1px #cdcdcd"></div>
<div class="t" style="left:700px;top:354.61px;font-size:17px;font-family:'Liberation Sans';font-weight:bold;color:#464e58;transform:scaleX(1.0385);transform-origin:0 0;">Create Book</div>
<div class="a" style="left:694px;top:429px;width:121px;height:31px;background:#ffffff;border:1px solid #ebebeb;box-shadow:1px 2px 1px #cdcdcd"></div>
<div class="t" style="left:700px;top:434.61px;font-size:17px;font-family:'Liberation Sans';font-weight:bold;color:#464e58;transform:scaleX(1.0301);transform-origin:0 0;">Update Book</div>
<div class="a" style="left:694px;top:510px;width:103px;height:30px;background:#ffffff;border:1px solid #ebebeb;box-shadow:1px 2px 1px #cdcdcd"></div>
<div class="t" style="left:700px;top:514.61px;font-size:17px;font-family:'Liberation Sans';font-weight:bold;color:#464e58;transform:scaleX(1.0359);transform-origin:0 0;">My Borrow</div>
<svg class="a" style="left:724px;top:452px;" width="12" height="18" viewBox="0 0 12 18"><path d="M1 1V14L4.3 11L6.8 16.5L9 15.5L6.5 10.2H11Z" fill="#ffffff" stroke="#333" stroke-width="1" stroke-linejoin="round"/></svg>
<div class="a" style="left:865px;top:51px;width:1px;height:446px;background:#1a1a1a;"></div>
<div class="a" style="left:866px;top:51px;width:55px;height:447px;background:#f0f0f0;border-right:1px solid #cfcfcf;border-bottom:1px solid #111"></div>
<div class="a" style="left:878px;top:64px;width:7px;height:1px;background:#627a86;"></div>
<svg class="a" style="left:901px;top:59px;" width="8" height="8" viewBox="0 0 8 8"><path d="M0.5 0.5L7.5 7.5M7.5 0.5L0.5 7.5" stroke="#627a86" stroke-width="1.2"/></svg>
<svg class="a" style="left:885px;top:84px;" width="17" height="17" viewBox="0 0 17 17"><path d="M5 3.5A7 7 0 1 0 12 3.5" fill="none" stroke="#627a86" stroke-width="2.2"/><path d="M8.5 0V8" stroke="#627a86" stroke-width="2.2"/></svg>
<svg class="a" style="left:884px;top:123px;" width="18" height="15" viewBox="0 0 18 15"><path d="M0 4.5H4L9 0.5V14.5L4 10.5H0Z" fill="#627a86"/><path d="M11 4A4 4 0 0 1 11 11Z" fill="#627a86"/><path d="M12 1A7 7 0 0 1 12 14" fill="none" stroke="#627a86" stroke-width="1.8"/></svg>
<svg class="a" style="left:885px;top:163px;" width="13" height="13" viewBox="0 0 13 13"><path d="M0 4H4L9 0V13L4 9H0Z" fill="#627a86"/><path d="M10.5 3.5A3.2 3.2 0 0 1 10.5 9.5Z" fill="#627a86"/></svg>
<svg class="a" style="left:883px;top:196px;" width="22" height="23" viewBox="0 0 22 23"><rect x="5.5" y="4.5" width="11" height="15" rx="1" transform="rotate(-45 11 12)" fill="none" stroke="#627a86" stroke-width="2.2"/><path d="M13 1A10 10 0 0 1 21 9" fill="none" stroke="#627a86" stroke-width="1.6"/></svg>
<svg class="a" style="left:883px;top:234px;" width="22" height="22" viewBox="0 0 22 22"><rect x="5.5" y="3.5" width="11" height="15" rx="1" transform="rotate(45 11 11)" fill="none" stroke="#627a86" stroke-width="2.2"/><path d="M9 1A10 10 0 0 0 1 9" fill="none" stroke="#627a86" stroke-width="1.6"/></svg>
<svg class="a" style="left:884px;top:275px;" width="18" height="16" viewBox="0 0 18 16"><path d="M5.5 0H12.5L14 2.5H18V16H0V2.5H4Z" fill="#627a86"/><circle cx="9" cy="9.2" r="3.6" fill="#f0f0f0"/><circle cx="9" cy="9.2" r="2.2" fill="#627a86"/></svg>
<svg class="a" style="left:885px;top:314px;" width="16" height="16" viewBox="0 0 16 16"><circle cx="6" cy="6" r="5" fill="none" stroke="#627a86" stroke-width="1.8"/><path d="M6 3.5V8.5M3.5 6H8.5" stroke="#627a86" stroke-width="1.4"/><path d="M9.5 9.5L15 15" stroke="#627a86" stroke-width="2"/></svg>
<svg class="a" style="left:887px;top:353px;" width="13" height="15" viewBox="0 0 13 15"><path d="M12 1V14L1.5 7.5Z" fill="none" stroke="#627a86" stroke-width="1.8" stroke-linejoin="round"/></svg>
<svg class="a" style="left:886px;top:391px;" width="15" height="15" viewBox="0 0 15 15"><circle cx="7.5" cy="7.5" r="6.4" fill="none" stroke="#627a86" stroke-width="1.8"/></svg>
<svg class="a" style="left:887px;top:430px;" width="13" height="14" viewBox="0 0 13 14"><rect x="1" y="1" width="11" height="12" fill="none" stroke="#627a86" stroke-width="1.8"/></svg>
<svg class="a" style="left:887px;top:474px;" width="14" height="4" viewBox="0 0 14 4"><circle cx="2" cy="2" r="1.7" fill="#627a86"/><circle cx="7" cy="2" r="1.7" fill="#627a86"/><circle cx="12" cy="2" r="1.7" fill="#627a86"/></svg>
</body></html>
